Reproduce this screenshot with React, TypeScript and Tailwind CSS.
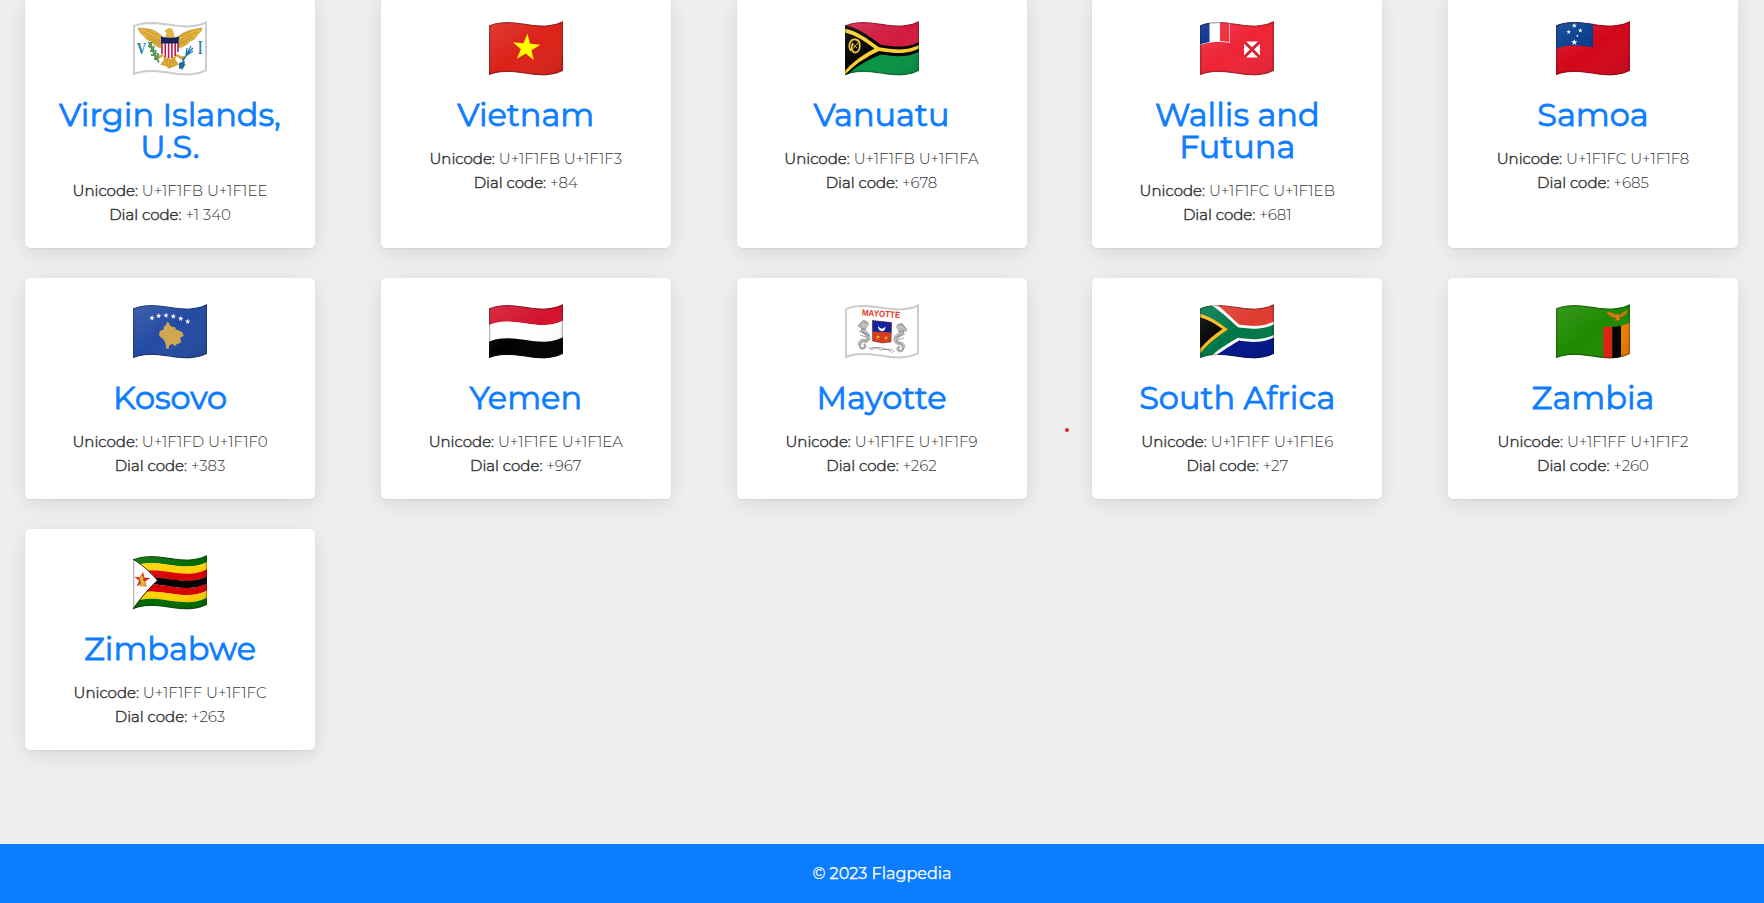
import type { ReactNode } from "react";

type Point = [number, number];

// Vertical displacement of the waving cloth at x (0..74).
function wave(x: number) {
  const t = x / 74;
  const u = 1 - t;
  return 4.3 * u * u * u - 19 * t * u * u + 37 * t * t * u;
}

// Bends a flat polygon (74 x 50) along the wave.
function bend(points: Point[]) {
  const out: string[] = [];
  points.forEach(([x0, y0], i) => {
    const [x1, y1] = points[(i + 1) % points.length];
    for (let s = 0; s < 12; s++) {
      const x = x0 + ((x1 - x0) * s) / 12;
      const y = y0 + ((y1 - y0) * s) / 12;
      out.push(`${x.toFixed(2)},${(y + wave(x)).toFixed(2)}`);
    }
  });
  return out.join(" ");
}

const rect = (x0: number, x1: number, y0: number, y1: number) =>
  bend([[x0, y0], [x1, y0], [x1, y1], [x0, y1]]);

function Area({ x0 = 0, x1 = 74, y0 = 0, y1 = 50, fill }: { x0?: number; x1?: number; y0?: number; y1?: number; fill: string }) {
  return <polygon points={rect(x0, x1, y0, y1)} fill={fill} />;
}

function Star({ cx, cy, r, fill, turn = 0 }: { cx: number; cy: number; r: number; fill: string; turn?: number }) {
  const pts = Array.from({ length: 10 }, (_, i) => {
    const a = ((i * 36 - 90 + turn) * Math.PI) / 180;
    const q = i % 2 ? r * 0.39 : r;
    return `${cx + q * Math.cos(a)},${cy + q * Math.sin(a)}`;
  });
  return <polygon points={pts.join(" ")} fill={fill} />;
}

function Flag({ id, pale, children }: { id: string; pale?: boolean; children: ReactNode }) {
  return (
    <svg viewBox="0 0 74 55" className="block h-[55px] w-[74px]">
      <defs>
        <clipPath id={`cloth-${id}`}>
          <polygon points={rect(0, 74, 0, 50)} />
        </clipPath>
        <linearGradient id={`sheen-${id}`} x1="0" y1="0" x2="1" y2="1">
          <stop offset="0" stopColor="#fff" stopOpacity="0.13" />
          <stop offset="0.5" stopColor="#fff" stopOpacity="0" />
          <stop offset="1" stopColor="#000" stopOpacity="0.1" />
        </linearGradient>
      </defs>
      <g clipPath={`url(#cloth-${id})`}>
        {children}
        {!pale && <polygon points={rect(0, 74, 0, 50)} fill={`url(#sheen-${id})`} />}
        <polygon
          points={rect(0, 74, 0, 50)}
          fill="none"
          stroke={pale ? "#cbcbcb" : "#1a1a1a"}
          strokeOpacity={pale ? 1 : 0.3}
          strokeWidth={pale ? 4 : 2.8}
        />
      </g>
    </svg>
  );
}

const flags: Record<string, ReactNode> = {
  vi: (
    <>
      <Area fill="#fff" />
      <text x="3.8" y="32.5" fontSize="17" fontWeight="700" fill="#2782ad" fontFamily="Liberation Serif, serif" textLength="9.5" lengthAdjust="spacingAndGlyphs">V</text>
      <text x="65" y="33" fontSize="18" fontWeight="700" fill="#2782ad" fontFamily="Liberation Serif, serif" textLength="4.4" lengthAdjust="spacingAndGlyphs">I</text>
      <path d="M5 7C11 8 19 7 25 12C29 15 31 17 32 20L28 27C22 25 19 22 18 20C14 19 12 17 11 15C8 13 6 10 5 7ZM69 7C61 8 52 10 46 15L41 20L44 27C51 26 55 23 57 20C61 19 63 17 64 14C67 12 69 9 69 7Z" fill="#e3b23c" stroke="#a98224" strokeWidth=".6" />
      <path d="M10 11L27 20M14 16L29 23M19 20L29 25M64 11L46 20M60 16L45 23M55 20L44 25M14 9L29 17M59 10L44 17" stroke="#b18b2b" strokeWidth=".7" />
      <path d="M31 20L34 12L32 10L34.5 8Q37 6 39.5 9L42 20Z" fill="#e6b73d" stroke="#a98224" strokeWidth=".4" />
      <path d="M31 33L25 37L21 36M42 33L48 37L52 36M31 33L32 39L29 43L33 44L36 46.5L40 45L44 43L41 38L43 33Z" fill="#e4b13a" stroke="#d8a634" strokeWidth="2.2" />
      <path d="M34 38V44M37 38V46M40 38V43" stroke="#9e7829" strokeWidth=".6" />
      <path d="M28 20H45V29C45 34 41 36 37 38C32 36 28 34 28 29Z" fill="#fff" />
      <path d="M29 21V33M32.3 21V36M35.6 21V37.5M38.9 21V37M42.2 21V35M45 21V31" stroke="#b81d4b" strokeWidth="1.6" />
      <path d="M28 15.5Q37 18 46 15.5L45.5 22.5H28Z" fill="#18235e" />
      <path d="M15.5 20.5L19 29L26 41.5" fill="none" stroke="#4f8b55" strokeWidth="1.6" />
      <path d="M15 25L18 26L18 21M17 30L20 30L20.5 25M18 34L22 34L22.5 29M21 38L24 38L25 32" fill="none" stroke="#55965b" strokeWidth="2.2" />
      <path d="M58 25L47 46M54 27L53 34M60 27L53 34M57 31L49 39M60 30L54 34M46 43L49 48L52 43" fill="none" stroke="#2477ab" strokeWidth="1.3" />
      <path d="M46 42L52 40L51 46L46 48Z" fill="#236d9b" />
    </>
  ),
  vn: (
    <>
      <Area fill="#dc2218" />
      <Star cx={37.3} cy={27} r={14.4} fill="#ffff00" turn={5} />
    </>
  ),
  vu: (
    <>
      <Area y1={25} fill="#d21a40" />
      <Area y0={25} fill="#079345" />
      <polygon points={bend([[0, 0], [36, 21.2], [74, 21.2], [74, 30.8], [36, 30.8], [3, 50], [0, 50]])} fill="#000" />
      <polygon points={bend([[0, 3.5], [34, 24], [74, 24], [74, 27.6], [34, 27.6], [0, 49.5], [0, 45.5], [29.5, 25.8], [0, 7.5]])} fill="#fcd02f" />
      <path d="M6 30C2.5 25 5 18 10.5 18.5C16.5 19.5 16 31 10 31.5C6 31 6 25 8 22" fill="none" stroke="#eac234" strokeWidth="1.8" />
      <path d="M7.5 28L13 22M8 23.5L12 27" stroke="#d8b52d" strokeWidth="1" />
    </>
  ),
  wf: (
    <>
      <Area fill="#ee2436" />
      <Area x1={30} y1={20} fill="#fff" />
      <Area x1={9.5} y1={19.5} fill="#002a8f" />
      <Area x0={20} x1={29.4} y1={19.2} fill="#ed2939" />
      <rect x="44" y="20.5" width="16" height="16" fill="#fff" />
      <path d="M44 20.5L60 36.5M60 20.5L44 36.5" stroke="#d9202f" strokeWidth="3" />
    </>
  ),
  ws: (
    <>
      <Area fill="#d3061a" />
      <Area x1={37} y1={23.5} fill="#003a8c" />
      <Star cx={18.3} cy={4.5} r={2.7} fill="#fff" />
      <Star cx={12.7} cy={11} r={2.4} fill="#fff" />
      <Star cx={24.3} cy={9.5} r={2.4} fill="#fff" />
      <Star cx={21.3} cy={15} r={1.4} fill="#fff" />
      <Star cx={18.3} cy={21.3} r={3.3} fill="#fff" />
    </>
  ),
  xk: (
    <>
      <Area fill="#234ba3" />
      {([[19, 14], [25.7, 11.8], [33, 11.4], [40.3, 12.4], [47.7, 14.7], [54.7, 17.5]] as Point[]).map(([x, y]) => (
        <Star key={x} cx={x} cy={y} r={2.9} fill="#fff" turn={5} />
      ))}
      <polygon points="34.3,17.7 36,19 37,21.5 40,23.3 41.7,22.7 43,25.5 46,26.5 49.3,28.3 50.7,31.7 47.3,33.7 48,38.7 44,40 42,42.3 39.3,39.7 36,41.7 35.7,45 33,44.3 32.7,40 31,36 28,33.5 26,31 26.7,27 30.3,25.7 31,22.5 33,21" fill="#d0a650" />
    </>
  ),
  ye: (
    <>
      <Area y1={16.8} fill="#d3122c" />
      <Area y0={16.7} y1={33.4} fill="#fff" />
      <Area y0={33.3} fill="#000" />
    </>
  ),
  yt: (
    <>
      <Area fill="#fff" />
      <text x="16.7" y="11.5" fontSize="9" fontWeight="700" fill="#df3c2c" fontFamily="Liberation Sans, sans-serif" textLength="38.5" lengthAdjust="spacingAndGlyphs" transform="rotate(4 17 11.5)">MAYOTTE</text>
      <g fill="none" stroke="#bdbdbd" strokeWidth="4" strokeLinecap="round" strokeLinejoin="round">
        <path d="M15 22L19 18L22 20L18 26L23 31Q25 35 21 37" />
        <path d="M60 26L56 21L53 23L57 28L51 33Q49 37 53 39" />
      </g>
      <g fill="none" stroke="#a8a8a8" strokeWidth="2.4" strokeLinecap="round">
        <path d="M21 37C14 36 13 45 18 44.5Q22 43 19.5 40.5" />
        <path d="M53 39C60 40 59 48 54.5 47Q51 45 54 43" />
      </g>
      <g fill="none" stroke="#666" strokeWidth=".6">
        <path d="M13 22L18 17L23 19M17 22L16 27L24 32M14 27L20 30L23 36M15 31L21 33M17 25L21 25M13 41Q13 35 20 35" />
        <path d="M62 26L57 20L52 21M57 25L59 29L50 34M60 30L54 33L51 38M59 34L53 36M57 28L53 27M60 44Q60 38 54 38" />
        <path d="M24 43C27 49 31 41 37 44S46 43 49 48M25 45Q28 41 36 46Q44 44 47 49" />
      </g>
      <path d="M27.5 16.5L46.5 18.5L46 38L37 39L27.5 37Z" fill="#d63c1d" />
      <path d="M27.5 16.5L46.5 18.5V28.5L27.5 27.5Z" fill="#17239b" />
      <path d="M33 22Q37 27 40.5 22.5Q40 28 36.5 27Q33 26.5 33 22Z" fill="#fff" />
      <path d="M27.5 16.5L46.5 18.5L46 38L37 39L27.5 37Z" fill="none" stroke="#48343d" strokeWidth=".8" strokeDasharray="1.4 .8" />
      <Star cx={33} cy={33} r={2.4} fill="#e5b51f" />
      <Star cx={41} cy={34} r={2.4} fill="#e5b51f" />
    </>
  ),
  za: (
    <>
      <Area fill="#fff" />
      <polygon points={bend([[17, 0], [39, 17.5], [74, 17.5], [74, 0]])} fill="#e03c31" />
      <polygon points={bend([[17, 50], [39, 33.5], [74, 33.5], [74, 50]])} fill="#001489" />
      <polygon points={bend([[0, 0], [11.5, 0], [38, 20.3], [74, 20.3], [74, 30.8], [38, 30.8], [12, 50], [0, 50]])} fill="#007749" />
      <polygon points={bend([[0, 5.5], [28, 24], [0, 45]])} fill="#ffb81c" />
      <polygon points={bend([[0, 9.2], [22.5, 24], [0, 40.5]])} fill="#000" />
    </>
  ),
  zm: (
    <>
      <Area fill="#1d8a00" />
      <Area x0={47.3} x1={56.5} y0={18.5} fill="#de2010" />
      <Area x0={56.3} x1={65.3} y0={18.5} fill="#000" />
      <Area x0={65} y0={18.5} fill="#ef7d00" />
      <path d="M50.5 8Q56 7.5 59.5 11L61 9.5L63 11Q67 8 72 6Q70 12 63.5 13.5L64 16.5H59L60 14Q53 13.5 50.5 8Z" fill="#e47a12" stroke="#8c6510" strokeWidth=".4" />
      <path d="M53 10L59 13M69 9L63 12" stroke="#965f10" strokeWidth=".6" />
    </>
  ),
  zw: (
    <>
      {["#006a00", "#ffd200", "#d80000", "#000", "#d80000", "#ffd200", "#006a00"].map((c, i) => (
        <Area key={i} y0={(i * 50) / 7} y1={((i + 1) * 50) / 7 + 0.1} fill={c} />
      ))}
      <polygon points={bend([[-1, -1], [24.5, 24], [-1, 51]])} fill="#fff" stroke="#000" strokeWidth=".9" />
      <Star cx={9.2} cy={25} r={8.5} fill="#d9201b" turn={5} />
      <path d="M8 20L10.5 22L10 25L13 28L12 31H7L8 27L6.5 24Z" fill="#e5b62c" stroke="#a77a18" strokeWidth=".6" />
    </>
  ),
};

type Country = {
  id: string;
  name: string;
  unicode: string;
  dial: string;
  pale?: boolean;
};

const countries: Country[] = [
  { id: "vi", name: "Virgin Islands, U.S.", unicode: "U+1F1FB U+1F1EE", dial: "+1 340", pale: true },
  { id: "vn", name: "Vietnam", unicode: "U+1F1FB U+1F1F3", dial: "+84" },
  { id: "vu", name: "Vanuatu", unicode: "U+1F1FB U+1F1FA", dial: "+678" },
  { id: "wf", name: "Wallis and Futuna", unicode: "U+1F1FC U+1F1EB", dial: "+681" },
  { id: "ws", name: "Samoa", unicode: "U+1F1FC U+1F1F8", dial: "+685" },
  { id: "xk", name: "Kosovo", unicode: "U+1F1FD U+1F1F0", dial: "+383" },
  { id: "ye", name: "Yemen", unicode: "U+1F1FE U+1F1EA", dial: "+967" },
  { id: "yt", name: "Mayotte", unicode: "U+1F1FE U+1F1F9", dial: "+262", pale: true },
  { id: "za", name: "South Africa", unicode: "U+1F1FF U+1F1E6", dial: "+27" },
  { id: "zm", name: "Zambia", unicode: "U+1F1FF U+1F1F2", dial: "+260" },
  { id: "zw", name: "Zimbabwe", unicode: "U+1F1FF U+1F1FC", dial: "+263" },
];

function Row({ label, value }: { label: string; value: string }) {
  return (
    <p className="h-6 text-[15px] leading-6 font-light whitespace-nowrap text-[#333]">
      <span className="[-webkit-text-stroke:0.5px_#3a3a3a]">{label}</span> {value}
    </p>
  );
}

function Card({ country }: { country: Country }) {
  return (
    <article className="flex flex-col items-center rounded-[5px] bg-white px-[25px] pt-[26px] pb-[21.5px] text-center shadow-[0_5px_22px_rgba(0,0,0,0.1),0_1px_2px_rgba(0,0,0,0.06)]">
      <Flag id={country.id} pale={country.pale}>{flags[country.id]}</Flag>
      <h2 className="mt-[23px] mb-[15.5px] text-[32px] leading-8 font-normal text-[#0d7dff] [-webkit-text-stroke:0.8px_#0d7dff]">
        {country.name}
      </h2>
      <Row label="Unicode:" value={country.unicode} />
      <Row label="Dial code:" value={country.dial} />
    </article>
  );
}

export default function App() {
  return (
    <div className="relative flex h-[903px] w-full flex-col overflow-hidden bg-[#efefef] font-['Montserrat','Inter',sans-serif]">
      <main className="-mt-[5px] grid flex-1 grid-cols-[repeat(5,290px)] content-start justify-between gap-y-[30px] pr-[26px] pl-[25px]">
        {countries.map((country) => (
          <Card key={country.id} country={country} />
        ))}
      </main>
      <footer className="flex h-[59px] items-center justify-center bg-[#0d7dff] text-[16px] font-normal text-white [-webkit-text-stroke:0.25px_#fff]">
        © 2023 Flagpedia
      </footer>
      <span className="absolute top-[428px] left-[1065px] size-1 rounded-full bg-[#e0242c]" />
    </div>
  );
}
